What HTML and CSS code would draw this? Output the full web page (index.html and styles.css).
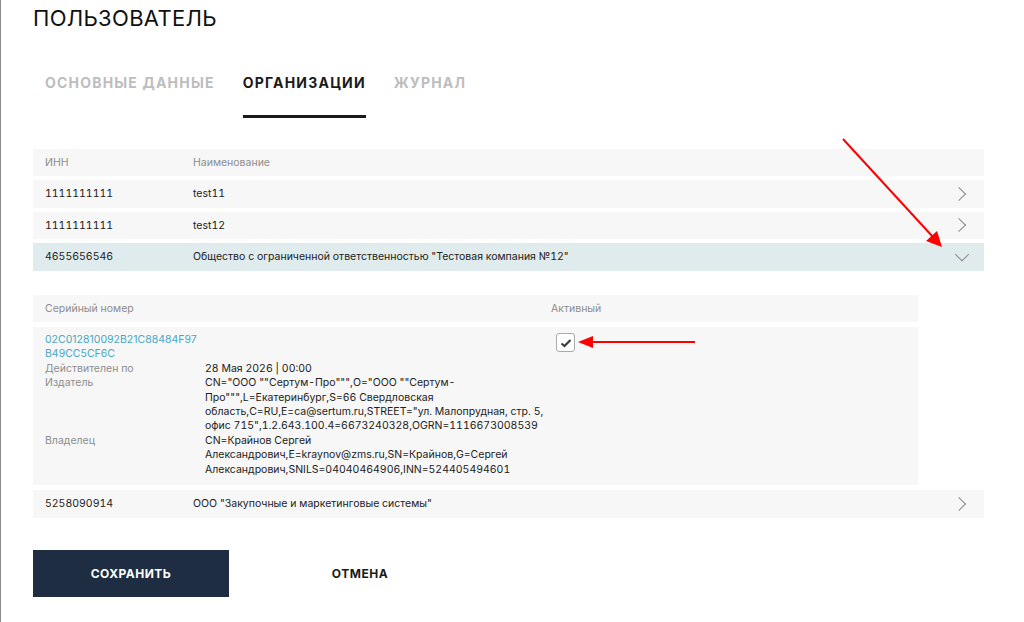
FILE: index.html
```html
<!DOCTYPE html>
<html lang="ru">
<head>
    <meta charset="UTF-8">
    <meta name="viewport" content="width=device-width, initial-scale=1.0">
    <title>Пользователь</title>
    <link rel="stylesheet" href="styles.css">
</head>
<body>
    <div class="page">
        <h1 class="title">ПОЛЬЗОВАТЕЛЬ</h1>

        <nav class="tabs">
            <a class="tab">ОСНОВНЫЕ ДАННЫЕ</a>
            <a class="tab active">ОРГАНИЗАЦИИ</a>
            <a class="tab">ЖУРНАЛ</a>
        </nav>

        <div class="table">
            <div class="row head">
                <div class="col-inn">ИНН</div>
                <div class="col-name">Наименование</div>
            </div>
            <div class="row">
                <div class="col-inn">1111111111</div>
                <div class="col-name">test11</div>
                <span class="chevron right"></span>
            </div>
            <div class="row">
                <div class="col-inn">1111111111</div>
                <div class="col-name">test12</div>
                <span class="chevron right"></span>
            </div>
            <div class="row selected">
                <div class="col-inn">4655656546</div>
                <div class="col-name">Общество с ограниченной ответственностью "Тестовая компания №12"</div>
                <span class="chevron down"></span>
            </div>

            <div class="certs">
                <div class="cert-row head">
                    <div class="col-serial">Серийный номер</div>
                    <div class="col-active">Активный</div>
                </div>
                <div class="cert-row">
                    <div class="col-serial">
                        <a class="serial">02C012810092B21C88484F97B49CC5CF6C</a>
                        <div class="details">
                            <div class="label">Действителен по</div>
                            <div class="value">28 Мая 2026 | 00:00</div>
                            <div class="label">Издатель</div>
                            <div class="value">CN="ООО ""Сертум-Про""",O="ООО ""Сертум-Про""",L=Екатеринбург,S=66 Свердловская область,C=RU,E=ca@sertum.ru,STREET="ул. Малопрудная, стр. 5, офис 715",1.2.643.100.4=6673240328,OGRN=1116673008539</div>
                            <div class="label">Владелец</div>
                            <div class="value">CN=Крайнов Сергей Александрович,E=kraynov@zms.ru,SN=Крайнов,G=Сергей Александрович,SNILS=04040464906,INN=524405494601</div>
                        </div>
                    </div>
                    <div class="col-active">
                        <span class="checkbox">
                            <svg width="12" height="10" viewBox="0 0 12 10"><path d="M1.5 5.5 L4.5 8 L10.5 2" fill="none" stroke="#3c3c3c" stroke-width="2.2"/></svg>
                        </span>
                    </div>
                </div>
            </div>

            <div class="row">
                <div class="col-inn">5258090914</div>
                <div class="col-name">ООО "Закупочные и маркетинговые системы"</div>
                <span class="chevron right"></span>
            </div>
        </div>

        <div class="actions">
            <button class="btn primary">СОХРАНИТЬ</button>
            <button class="btn">ОТМЕНА</button>
        </div>

        <!-- annotation arrows -->
        <svg class="marks" width="1024" height="622" viewBox="0 0 1024 622">
            <line x1="843" y1="139" x2="933" y2="237" stroke="#f00" stroke-width="2"/>
            <polygon points="942,247 926,241 937,231" fill="#f00"/>
            <line x1="695" y1="342" x2="590" y2="342" stroke="#f00" stroke-width="2"/>
            <polygon points="578,342 593,336 593,348" fill="#f00"/>
        </svg>
    </div>
</body>
</html>
```

FILE: styles.css
```css
/* General styling */
body {
    margin: 0;
    font-family: Inter, 'Noto Sans', sans-serif;
    background: #ffffff;
    color: #222;
}

.page {
    position: relative;
    height: 622px;
    box-sizing: border-box;
    padding: 4px 40px 0 32px;
    border-left: 1px solid #8c8c8c;
    overflow: hidden;
}

.title {
    margin: 0;
    font-size: 22px;
    font-weight: 400;
    line-height: 28px;
    letter-spacing: 0.3px;
    color: #111;
}

/* Tabs */
.tabs {
    display: flex;
    gap: 28px;
    margin-top: 38px;
    padding-left: 12px;
}

.tab {
    font-size: 14px;
    font-weight: 700;
    letter-spacing: 1.2px;
    color: #bdbdbd;
    padding: 4px 0 24px;
    border-bottom: 3px solid transparent;
}

.tab.active {
    color: #1a1a1a;
    border-bottom-color: #1a1a1a;
}

/* Organisations table */
.table {
    margin-top: 31px;
    display: flex;
    flex-direction: column;
    gap: 4px;
    font-size: 10.5px;
    font-variant-numeric: tabular-nums;
}

.row {
    position: relative;
    display: flex;
    align-items: center;
    height: 27.5px;
    padding-left: 12px;
    background: #f7f7f7;
}

.row.head {
    height: 27px;
    color: #8d8d8d;
}

.row.selected {
    background: #e0ebed;
}

.col-inn {
    width: 148px;
}

.chevron {
    position: absolute;
    right: 20px;
    top: 50%;
    width: 9px;
    height: 9px;
    border-right: 1.5px solid #8a8a8a;
    border-bottom: 1.5px solid #8a8a8a;
}

.chevron.right {
    transform: translateY(-50%) rotate(-45deg);
}

.chevron.down {
    transform: translateY(-75%) rotate(45deg);
    right: 17px;
}

/* Certificates */
.certs {
    width: 885px;
    margin: 20.5px 0 1px;
    display: flex;
    flex-direction: column;
    gap: 5px;
}

.cert-row {
    display: flex;
    padding-left: 12px;
    background: #f7f7f7;
}

.cert-row.head {
    height: 27px;
    align-items: center;
    color: #8d8d8d;
}

.cert-row + .cert-row {
    padding-top: 6px;
    padding-bottom: 8px;
    line-height: 14.4px;
}

.col-serial {
    width: 506px;
}

.serial {
    display: block;
    width: 156px;
    word-break: break-all;
    font-variant-numeric: normal;
    color: #4aa8c2;
}

.details {
    display: grid;
    grid-template-columns: 160px 346px;
}

.label {
    color: #8d8d8d;
}

.checkbox {
    display: flex;
    align-items: center;
    justify-content: center;
    width: 17px;
    height: 17px;
    margin-left: 5px;
    border: 1px solid #a4abb3;
    border-radius: 3px;
    background: #fff;
}

/* Buttons */
.actions {
    display: flex;
    gap: 33px;
    margin-top: 32.5px;
}

.btn {
    width: 196px;
    height: 47px;
    border: none;
    background: transparent;
    font-family: Inter, sans-serif;
    font-size: 12px;
    font-weight: 700;
    letter-spacing: 0.5px;
    color: #1a1a1a;
}

.btn.primary {
    background: #1e2d42;
    color: #fff;
}

.marks {
    position: absolute;
    left: -1px;
    top: 0;
    pointer-events: none;
}
```
